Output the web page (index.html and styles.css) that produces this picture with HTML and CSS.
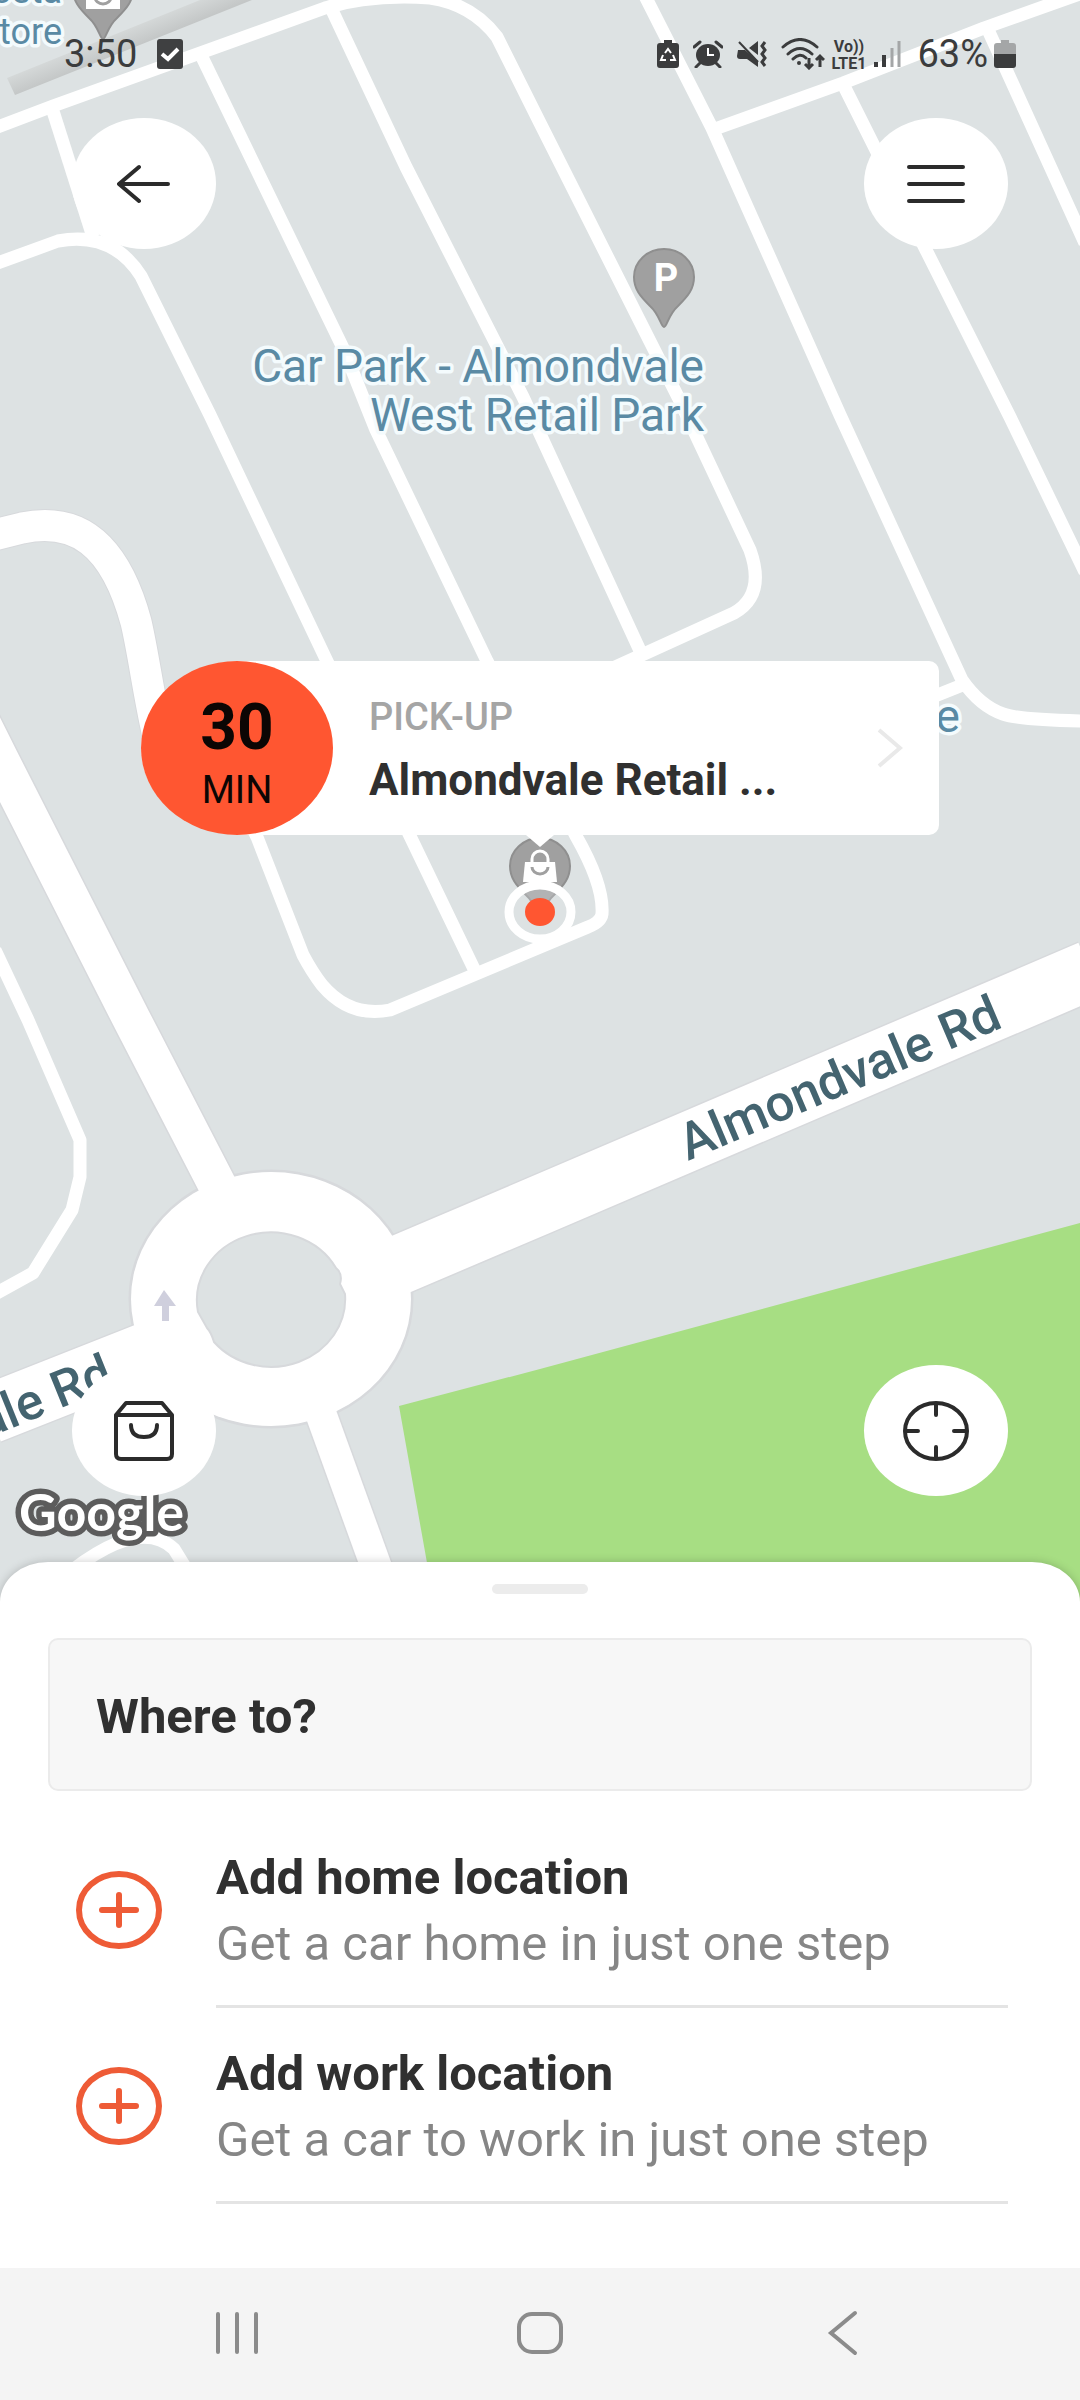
FILE: index.html
```html
<!DOCTYPE html>
<html lang="en">
<head>
  <meta charset="UTF-8" />
  <meta name="viewport" content="width=device-width, initial-scale=1.0"/>
  <title>Where to?</title>
  <link rel="stylesheet" href="styles.css">
</head>
<body>
  <main class="map">
    <!-- Map drawing -->
    <svg class="map-canvas" viewBox="0 0 1080 1602" preserveAspectRatio="xMidYMin slice">
      <defs>
        <linearGradient id="shade" gradientUnits="userSpaceOnUse" x1="118" y1="22" x2="129" y2="49">
          <stop offset="0" stop-color="#dde1e1"/>
          <stop offset="1" stop-color="#c4c7c7"/>
        </linearGradient>
        <path id="pin" d="M0 50 C-3 50 -4 38 -14 29 C-24 19 -30 12 -30 0 A30 28 0 0 1 30 0 C30 12 24 19 14 29 C4 38 3 50 0 50 Z"/>
      </defs>

      <path class="park" d="M399 1406 L540 1369 L1080 1223 V1602 H434 Z"/>
      <path fill="url(#shade)" d="M7 78 L15 95 L252 0 H200 Z"/>

      <g class="road-edge">
        <path class="w-big" d="M-20 720 L0 760 L132 1020 L225 1200"/>
        <path class="w-wide" d="M-10 536 L22 528 C75 517 114 541 136 622 C145 660 151 715 164 760"/>
        <path class="w-main" d="M340 1290 L540 1205 L1090 970 M-10 1414 L190 1335"/>
        <path class="w-exit" d="M313 1392 L389 1602"/>
        <ellipse cx="271" cy="1299" rx="141" ry="128"/>
      </g>

      <g class="road">
        <path d="M-5 128 L53 106 L325 8 Q370 -6 430 -2 Q472 4 497 37 L540 123 L678 397 L750 550 Q766 595 734 613 L600 674"/>
        <path d="M52 108 L93 237"/>
        <path d="M-5 264 L58 241 C90 235 120 243 141 276 L210 415 L325 657 L410 836 L475 971"/>
        <path d="M201 55 L344 350 L376 430 L487 661 L576 836 Q604 885 602 914 Q601 922 588 927 L390 1010 Q350 1018 322 985 Q312 972 303 955 L257 837 L205 735"/>
        <path d="M331 8 L406 167 L523 397 L642 655"/>
        <path d="M644 -6 L712 128 L840 415 L962 680 Q980 706 1003 714 Q1020 720 1085 721"/>
        <path d="M712 130 L843 83 L984 28 L1085 -8"/>
        <path d="M844 86 L926 250 L1010 417 L1085 572"/>
        <path d="M989 32 L1005 67 L1085 243"/>
        <path d="M920 702 L965 684"/>
        <path d="M-5 950 L28 1020 L80 1140 V1177 L72 1210 L33 1273 L-5 1294"/>
        <path d="M60 1580 Q138 1515 174 1549 L190 1575"/>
      </g>

      <g class="road-fill">
        <path class="w-big" d="M-20 720 L0 760 L132 1020 L225 1200"/>
        <path class="w-wide" d="M-10 536 L22 528 C75 517 114 541 136 622 C145 660 151 715 164 760"/>
        <path class="w-main" d="M340 1290 L540 1205 L1090 970 M-10 1414 L190 1335"/>
        <path class="w-exit" d="M313 1392 L389 1602"/>
      </g>
      <ellipse fill="#fff" cx="271" cy="1299" rx="140" ry="127"/>
      <path class="island" d="M336 1268 Q343 1274 340 1284 L345 1294 A74 68 0 0 1 214 1342 Q211 1332 207 1328 L198 1312 A74 68 0 0 1 336 1268 Z"/>
      <path fill="#cfcfdd" d="M164 1290 L176 1306 H169 V1321 H162 V1306 H154 Z"/>

      <!-- Places -->
      <g transform="translate(103 -11)">
        <use href="#pin" class="pin"/>
        <path fill="#fff" d="M-17 -10 H17 V20 H-17 Z"/>
        <path class="pin-line" d="M-8 8 A8 7 0 0 0 8 8"/>
      </g>
      <g transform="translate(664 277)">
        <use href="#pin" class="pin"/>
        <text class="pin-letter" x="2" y="14">P</text>
      </g>
      <g transform="translate(540 866)">
        <use href="#pin" class="pin"/>
        <path fill="#fff" d="M-15 -4 H15 L17 16 H-17 Z"/>
        <path fill="none" stroke="#fff" stroke-width="3" d="M-8 -3 V-7 A8 8 0 0 1 8 -7 V-3"/>
        <path class="pin-line" d="M-8 1 A8 7 0 0 0 8 1"/>
      </g>

      <g class="place">
        <text class="place-small" x="62" y="3">Costa</text>
        <text class="place-small" x="62" y="44">Store</text>
        <text x="704" y="382">Car Park - Almondvale</text>
        <text x="704" y="431">West Retail Park</text>
        <text x="960" y="732">e</text>
      </g>
      <text class="street" transform="translate(688 1161) rotate(-23)">Almondvale Rd</text>
      <text class="street street-end" transform="translate(116 1386) rotate(-22)">Almondvale Rd</text>
      <text class="google" x="19" y="1531">Google</text>

      <!-- Pick-up point -->
      <ellipse fill="#dde2e3" fill-opacity=".3" stroke="#fff" stroke-width="9" cx="540" cy="912" rx="31" ry="27"/>
      <ellipse fill="#ff5631" cx="540" cy="912" rx="15" ry="14"/>
    </svg>

    <div class="status">
      <span class="time">3:50</span>
      <svg class="checked" width="26" height="30" viewBox="0 0 26 30">
        <rect width="26" height="30" rx="3" fill="#3f4041"/>
        <path d="M5 15 L11 20 L21 10" fill="none" stroke="#fff" stroke-width="4"/>
      </svg>

      <div class="status-icons">
        <svg width="22" height="28" viewBox="0 0 22 28">
          <path fill="#3b3c3d" d="M7 0 H15 V3 H19 Q22 3 22 6 V25 Q22 28 19 28 H3 Q0 28 0 25 V6 Q0 3 3 3 H7 Z"/>
          <path d="M8 13 L11 9 L14 13 M16 15 L18 20 H13 M9 20 H4 L6 15" fill="none" stroke="#fff" stroke-width="2"/>
        </svg>
        <svg width="30" height="28" viewBox="0 0 30 28">
          <ellipse cx="15" cy="15" rx="12" ry="11" fill="#3b3c3d"/>
          <path d="M1 7 L7 2 M29 7 L23 2 M7 23 L3 27 M23 23 L27 27" stroke="#3b3c3d" stroke-width="3" stroke-linecap="round"/>
          <path d="M15 8 V15 H21" fill="none" stroke="#fff" stroke-width="2"/>
        </svg>
        <svg width="30" height="28" viewBox="0 0 30 28">
          <path fill="#3b3c3d" d="M1 10 H8 L21 21 V27 L10 19 H3 Q0 19 0 16 Z M12 8 L21 1 V15 Z"/>
          <path d="M2 2 L21 22" stroke="#3b3c3d" stroke-width="2"/>
          <path d="M28 2 L25 6 L28 10 L25 14 L28 18 L25 22 L28 26" fill="none" stroke="#3b3c3d" stroke-width="3"/>
        </svg>
        <svg width="44" height="32" viewBox="0 0 44 32">
          <path d="M2 9 Q19 -6 36 9 M7 16 Q19 5 31 16 M12 21 Q19 14 25 20" fill="none" stroke="#3b3c3d" stroke-width="3" stroke-linecap="round"/>
          <circle cx="18" cy="25" r="2" fill="#3b3c3d"/>
          <path d="M28 20 V30 M24 26 L28 30 L32 26 M39 29 V18 M35 22 L39 18 L43 22" fill="none" stroke="#3b3c3d" stroke-width="3"/>
        </svg>
        <span class="volte"><span>Vo))</span><span>LTE1</span></span>
        <svg width="27" height="28" viewBox="0 0 27 28">
          <path d="M2 22 V27 M10 15 V27" stroke="#3b3c3d" stroke-width="4"/>
          <path d="M18 8 V27 M25 1 V27" stroke="#a4a6a7" stroke-width="3"/>
        </svg>
        <span class="percent">63%</span>
        <svg width="22" height="28" viewBox="0 0 22 28">
          <path fill="#a4a6a7" d="M7 0 H15 V3 H19 Q22 3 22 6 V14 H0 V6 Q0 3 3 3 H7 Z"/>
          <path fill="#3b3c3d" d="M0 14 H22 V25 Q22 28 19 28 H3 Q0 28 0 25 Z"/>
        </svg>
      </div>
    </div>

    <div class="map-buttons">
      <button class="round" aria-label="Back">
        <svg width="54" height="40" viewBox="0 0 54 40"><path d="M51 20 H3 M22 3 L2 20 L22 37"/></svg>
      </button>
      <button class="round" aria-label="Menu">
        <svg width="60" height="40" viewBox="0 0 60 40"><path d="M3 3 H57 M3 20 H57 M3 37 H57"/></svg>
      </button>
    </div>

    <button class="pickup">
      <span class="eta"><strong>30</strong><span>MIN</span></span>
      <span class="pickup-text">
        <span class="pickup-label">PICK-UP</span>
        <span class="pickup-name">Almondvale Retail ...</span>
      </span>
      <svg width="26" height="40" viewBox="0 0 26 40"><path d="M2 2 L23 20 L2 38"/></svg>
    </button>

    <div class="map-buttons map-buttons-bottom">
      <button class="round" aria-label="Orders">
        <svg width="60" height="60" viewBox="0 0 60 60"><path d="M2 14 L12 2 H48 L58 14 V53 Q58 58 53 58 H7 Q2 58 2 53 Z M2 14 H58 M17 24 Q17 36 30 36 Q43 36 43 24"/></svg>
      </button>
      <button class="round" aria-label="My location">
        <svg width="66" height="60" viewBox="0 0 66 60"><ellipse cx="33" cy="30" rx="31" ry="28"/><path d="M33 3 V14 M33 46 V57 M3 30 H15 M51 30 H63"/></svg>
      </button>
    </div>
  </main>

  <section class="sheet">
    <div class="handle"></div>
    <input type="text" class="where" placeholder="Where to?" aria-label="Where to?" />

    <a href="#home" class="place-row">
      <svg width="86" height="80" viewBox="0 0 86 80"><ellipse cx="43" cy="40" rx="40" ry="36"/><path d="M43 25 V55 M26 40 H60"/></svg>
      <span class="place-text">
        <strong>Add home location</strong>
        <span>Get a car home in just one step</span>
      </span>
    </a>
    <a href="#work" class="place-row">
      <svg width="86" height="80" viewBox="0 0 86 80"><ellipse cx="43" cy="40" rx="40" ry="36"/><path d="M43 25 V55 M26 40 H60"/></svg>
      <span class="place-text">
        <strong>Add work location</strong>
        <span>Get a car to work in just one step</span>
      </span>
    </a>
  </section>

  <nav class="navbar">
    <button aria-label="Recent apps">
      <svg width="48" height="46" viewBox="0 0 48 46"><path d="M5 4 V42 M24 4 V42 M43 4 V42"/></svg>
    </button>
    <button aria-label="Home">
      <svg width="48" height="46" viewBox="0 0 48 46"><rect x="3" y="4" width="42" height="38" rx="13"/></svg>
    </button>
    <button aria-label="Back">
      <svg width="48" height="46" viewBox="0 0 48 46"><path d="M36 3 L12 23 L36 43"/></svg>
    </button>
  </nav>
</body>
</html>
```
FILE: styles.css
```css
* {
  box-sizing: border-box;
}

body {
  margin: 0;
  min-height: 100vh;
  display: flex;
  flex-direction: column;
  font-family: Roboto, Arial, sans-serif;
  color: #303030;
  background-color: #fff;
}

button {
  border: none;
  padding: 0;
  font-family: inherit;
  color: inherit;
  background: none;
  cursor: pointer;
}

/* Map */
.map {
  position: relative;
  flex: 1;
  display: flex;
  flex-direction: column;
  min-height: 1200px;
  padding-bottom: 106px;
  background-color: #dde2e3;
  overflow: hidden;
}

.map-canvas {
  position: absolute;
  top: 0;
  left: 0;
  width: 100%;
  height: 100%;
}

.park {
  fill: #a7de83;
}

.road {
  fill: none;
  stroke: #fff;
  stroke-width: 13px;
  stroke-linejoin: round;
}

.road-fill,
.road-edge {
  fill: none;
  stroke: #fff;
}

.road-edge {
  stroke: #d7d9dc;
  stroke-width: 3px;
}

.w-big { stroke-width: 38px; }
.w-wide { stroke-width: 31px; }
.w-main { stroke-width: 59px; }
.w-exit { stroke-width: 31px; }

.road-edge .w-big { stroke-width: 41px; }
.road-edge .w-wide { stroke-width: 33px; }
.road-edge .w-main { stroke-width: 62px; }
.road-edge .w-exit { stroke-width: 34px; }

.island {
  fill: #dde2e3;
  stroke: #d7d9dc;
  stroke-width: 2px;
}

.pin {
  fill: #a0a0a0;
  stroke: #8f8f8f;
  stroke-width: 2px;
}

.pin-line {
  fill: none;
  stroke: #a0a0a0;
  stroke-width: 3px;
}

.pin-letter {
  font-size: 38px;
  font-weight: bold;
  fill: #fff;
  text-anchor: middle;
}

.place {
  font-size: 46px;
  fill: #5a8aa4;
  stroke: #f4fbfd;
  stroke-width: 7px;
  stroke-linejoin: round;
  paint-order: stroke;
  text-anchor: end;
}

.place-small {
  font-size: 36px;
}

.street {
  font-size: 51px;
  font-weight: 500;
  fill: #446470;
}

.street-end {
  text-anchor: end;
}

.google {
  font-family: Lato, sans-serif;
  font-size: 52px;
  font-weight: bold;
  fill: #fff;
  stroke: #5c5c5c;
  stroke-width: 11px;
  stroke-linejoin: round;
  paint-order: stroke;
}

/* Status bar */
.status {
  position: relative;
  display: flex;
  align-items: center;
  height: 108px;
  padding: 0 64px;
  font-size: 38px;
  color: #3b3c3d;
}

.checked {
  margin-left: 20px;
}

.status-icons {
  display: flex;
  align-items: center;
  gap: 14px;
  margin-left: auto;
}

.volte {
  display: flex;
  flex-direction: column;
  align-items: center;
  margin: 0 -6px -2px -8px;
  font-size: 16px;
  line-height: 17px;
  font-weight: bold;
}

.percent {
  margin-right: -8px;
  margin-left: 2px;
}

/* Round buttons over the map */
.map-buttons {
  position: relative;
  display: flex;
  justify-content: space-between;
  padding: 10px 72px;
}

.map-buttons-bottom {
  margin-top: auto;
  padding-bottom: 0;
}

.round {
  display: flex;
  align-items: center;
  justify-content: center;
  width: 144px;
  height: 131px;
  border-radius: 50%;
  background-color: #fff;
}

.round svg {
  fill: none;
  stroke: #2b2b2b;
  stroke-width: 4px;
  stroke-linecap: round;
  stroke-linejoin: round;
}

/* Pick-up card */
.pickup {
  position: absolute;
  top: 661px;
  left: 141px;
  right: 141px;
  display: flex;
  align-items: center;
  height: 174px;
  padding-right: 36px;
  border-radius: 100px 10px 10px 100px / 87px 10px 10px 87px;
  background-color: #fff;
  text-align: left;
}

.pickup::after {
  content: "";
  position: absolute;
  top: 100%;
  left: 50%;
  margin-left: -14px;
  border: 14px solid transparent;
  border-top: 12px solid #fff;
  border-bottom: 0;
}

.eta {
  display: flex;
  flex-direction: column;
  align-items: center;
  justify-content: center;
  width: 192px;
  height: 174px;
  padding-top: 12px;
  border-radius: 50%;
  background-color: #ff5631;
  color: #0c0604;
  font-size: 38px;
  line-height: 52px;
}

.eta strong {
  font-size: 64px;
  line-height: 72px;
}

.pickup-text {
  flex: 1;
  display: flex;
  flex-direction: column;
  margin-left: 36px;
}

.pickup-label {
  font-size: 38px;
  line-height: 64px;
  font-weight: 500;
  color: #a5a5a5;
}

.pickup-name {
  font-size: 44px;
  line-height: 62px;
  font-weight: bold;
}

.pickup svg {
  fill: none;
  stroke: #e9e9e9;
  stroke-width: 4px;
}

/* Bottom sheet */
.sheet {
  position: relative;
  margin-top: -40px;
  padding: 22px 48px 64px;
  border-radius: 48px 48px 0 0 / 40px 40px 0 0;
  background-color: #fff;
  box-shadow: 0 0 10px rgba(0, 0, 0, 0.2);
}

.handle {
  width: 96px;
  height: 10px;
  margin: 0 auto 44px;
  border-radius: 5px;
  background-color: #ececec;
}

.where {
  display: block;
  width: 100%;
  height: 153px;
  margin-bottom: 21px;
  padding: 4px 46px 0;
  border: 2px solid #ebebeb;
  border-radius: 10px;
  background-color: #f7f7f7;
  font-family: inherit;
  font-size: 49px;
  font-weight: bold;
}

.where::placeholder {
  color: #303030;
  opacity: 1;
}

.place-row {
  display: flex;
  align-items: center;
  height: 196px;
  padding: 0 24px 0 28px;
  color: inherit;
  text-decoration: none;
}

.place-row svg {
  fill: none;
  stroke: #ee5b36;
  stroke-width: 6px;
  stroke-linecap: round;
}

.place-text {
  flex: 1;
  display: flex;
  flex-direction: column;
  justify-content: center;
  height: 100%;
  margin-left: 54px;
  padding-top: 4px;
  border-bottom: 3px solid #e4e4e4;
  font-size: 49px;
  line-height: 66px;
  color: #868686;
}

.place-text strong {
  color: #303030;
}

/* System navigation */
.navbar {
  position: relative;
  display: flex;
  height: 132px;
  padding: 0 86px;
  background-color: #f4f4f4;
}

.navbar button {
  flex: 1;
}

.navbar svg {
  fill: none;
  stroke: #8b8b8b;
  stroke-width: 4px;
  stroke-linecap: round;
}
```
